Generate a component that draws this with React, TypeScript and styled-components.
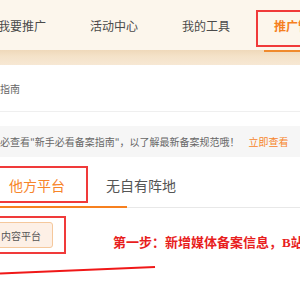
import styled, { createGlobalStyle } from 'styled-components';

const GlobalStyle = createGlobalStyle`
  html, body {
    margin: 0;
    padding: 0;
    background: #fff;
    overflow: hidden;
  }
  body {
    font-family: 'Noto Sans CJK SC', 'Noto Sans', sans-serif;
    color: #555;
  }
`;

const Page = styled.div`
  width: 300px;
  height: 300px;
  overflow: hidden;
`;

const Header = styled.div`
  height: 50px;
  background: #fcf6ec;
`;

const Nav = styled.div`
  display: flex;
  margin-left: -24px;
  height: 50px;
`;

const NavItem = styled.div<{ $active?: boolean }>`
  position: relative;
  flex: 0 0 92px;
  display: flex;
  align-items: center;
  justify-content: center;
  font-size: 12px;
  color: ${p => (p.$active ? '#f5801f' : '#4a4a4a')};
  font-weight: ${p => (p.$active ? 'bold' : 'normal')};
  white-space: nowrap;
`;

const RedBox = styled.div`
  position: absolute;
  top: 10px;
  left: 4px;
  width: 84px;
  height: 37px;
  box-sizing: border-box;
  border: 2px solid #f03a3a;
`;

const ActiveLine = styled.div`
  position: absolute;
  left: 12px;
  bottom: -2px;
  width: 68px;
  height: 2px;
  background: #f08a2c;
`;

const Band = styled.div`
  height: 15px;
  background: linear-gradient(180deg, #efd9ba 0%, #f4e2c8 40%, #f7e8d4 100%);
`;

const Crumb = styled.div`
  height: 46px;
  display: flex;
  align-items: center;
  border-bottom: 1px solid #efefef;
  font-size: 10px;
  color: #666;
  span {
    margin-left: -20px;
  }
`;

const Notice = styled.div`
  margin-top: 14px;
  height: 31px;
  display: flex;
  align-items: center;
  background: #f6f6f6;
  font-size: 10px;
  color: #666;
  white-space: nowrap;
`;

const NoticeText = styled.span`
  margin-left: -10px;
`;

const NoticeLink = styled.span`
  margin-left: 9px;
  color: #f7852a;
`;

const TabBar = styled.div`
  position: relative;
  margin-top: 9px;
  height: 41px;
  display: flex;
  border-bottom: 1px solid #e8e8e8;
`;

const Tab = styled.div<{ $active?: boolean; $marked?: boolean }>`
  position: relative;
  height: 37px;
  padding: 0 8px;
  margin-left: ${p => (p.$active ? '1px' : '25px')};
  display: flex;
  align-items: center;
  font-size: 14px;
  color: ${p => (p.$active ? '#f7852a' : '#555')};
  white-space: nowrap;
  &::after {
    content: '';
    display: ${p => (p.$marked ? 'block' : 'none')};
    position: absolute;
    top: 0;
    bottom: 0;
    left: -15px;
    right: -15px;
    border: 2px solid #f03a3a;
  }
`;

const Indicator = styled.div`
  position: absolute;
  left: 0;
  bottom: -1px;
  width: 127px;
  height: 2px;
  background: #f7801f;
`;

const Content = styled.div`
  margin-top: 8px;
  display: flex;
  align-items: flex-start;
  margin-left: -24px;
`;

const Marked = styled.div`
  border: 2px solid #f03a3a;
  padding: 4px 11px;
`;

const PlatformButton = styled.div`
  height: 24px;
  padding: 0 11px;
  display: flex;
  align-items: center;
  background: #fdf0e6;
  border: 1px solid #f5c89c;
  border-radius: 3px;
  font-size: 10px;
  color: #555;
  white-space: nowrap;
`;

const Note = styled.div`
  margin-left: 47px;
  padding-top: 16px;
  font-family: 'Liberation Serif', 'Noto Sans CJK SC', serif;
  font-weight: bold;
  font-size: 13px;
  color: #e81e1e;
  white-space: nowrap;
`;

const Stroke = styled.svg`
  display: block;
  margin-top: 12px;
`;

export default function App() {
  return (
    <Page>
      <GlobalStyle />
      <Header>
        <Nav>
          <NavItem>我要推广</NavItem>
          <NavItem>活动中心</NavItem>
          <NavItem>我的工具</NavItem>
          <NavItem $active>
            推广管理
            <RedBox />
            <ActiveLine />
          </NavItem>
        </Nav>
      </Header>
      <Band />
      <Crumb>
        <span>备案指南</span>
      </Crumb>
      <Notice>
        <NoticeText>务必查看"新手必看备案指南"，以了解最新备案规范哦！</NoticeText>
        <NoticeLink>立即查看</NoticeLink>
      </Notice>
      <TabBar>
        <Tab $active $marked>他方平台</Tab>
        <Tab>无自有阵地</Tab>
        <Indicator />
      </TabBar>
      <Content>
        <Marked>
          <PlatformButton>内容平台</PlatformButton>
        </Marked>
        <Note>第一步：新增媒体备案信息，B站平台</Note>
      </Content>
      <Stroke width="160" height="10" viewBox="0 0 160 10">
        <line x1="0" y1="7.5" x2="155" y2="1" stroke="#f01818" strokeWidth="2" />
      </Stroke>
    </Page>
  );
}
